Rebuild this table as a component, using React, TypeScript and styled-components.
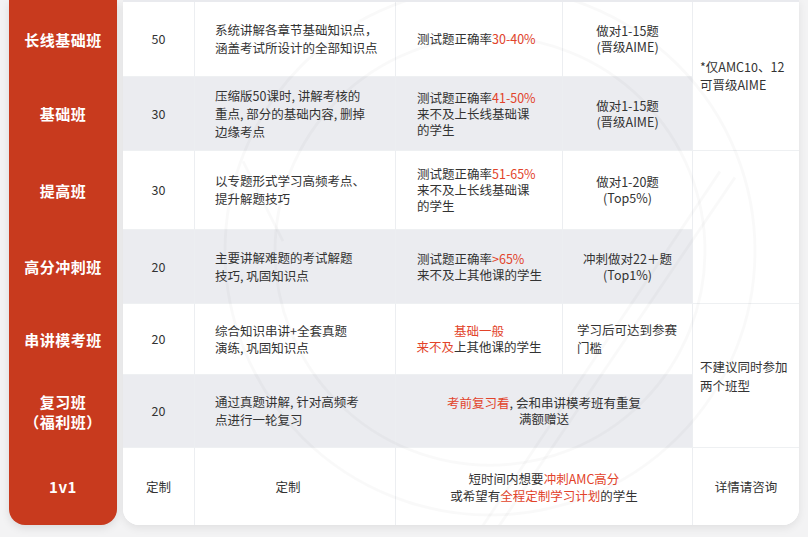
import styled, { createGlobalStyle } from "styled-components";

const GlobalStyle = createGlobalStyle`
  html, body {
    margin: 0;
    padding: 0;
    background: #f3f3f4;
  }
  body {
    font-family: "Noto Sans CJK SC", "Noto Sans", sans-serif;
    color: #333;
  }
`;

// 表格行高（与左侧红色标签列共用）
const ROWS = "75px 74px 79px 74px 71px 73px 77px";

export default function App() {
  return (
    <>
      <GlobalStyle />
      <Page>
        <LabelColumn>
          <Label>长线基础班</Label>
          <Label>基础班</Label>
          <Label>提高班</Label>
          <Label>高分冲刺班</Label>
          <Label>串讲模考班</Label>
          <Label>
            复习班
            <br />
            （福利班）
          </Label>
          <Label>1v1</Label>
        </LabelColumn>

        <Card>
          <Watermark viewBox="0 0 676 525" preserveAspectRatio="none">
            <circle cx="367" cy="250" r="215" />
            <circle cx="367" cy="250" r="265" />
            <line x1="357" y1="530" x2="597" y2="170" />
            <line x1="372" y1="532" x2="612" y2="176" />
            <line x1="120" y1="160" x2="160" y2="240" />
          </Watermark>

          {/* 长线基础班 */}
          <Cell $col="1" $row="1" $align="center">50</Cell>
          <Cell $col="2" $row="1" $pl={20} $lh={18}>
            系统讲解各章节基础知识点，
            <br />
            涵盖考试所设计的全部知识点
          </Cell>
          <Cell $col="3" $row="1" $pl={21}>
            <span>
              测试题正确率<Hl>30-40%</Hl>
            </span>
          </Cell>
          <Cell $col="4" $row="1" $align="center">
            做对1-15题
            <br />
            (晋级AIME)
          </Cell>
          <Cell $col="5" $row="1 / 3" $pl={7} $lh={18} $last>
            *仅AMC10、12
            <br />
            可晋级AIME
          </Cell>

          {/* 基础班 */}
          <Cell $col="1" $row="2" $align="center" $shade>30</Cell>
          <Cell $col="2" $row="2" $pl={20} $lh={18} $shade>
            压缩版50课时, 讲解考核的
            <br />
            重点, 部分的基础内容, 删掉
            <br />
            边缘考点
          </Cell>
          <Cell $col="3" $row="2" $pl={21} $shade>
            <span>
              测试题正确率<Hl>41-50%</Hl>
              <br />
              来不及上长线基础课
              <br />
              的学生
            </span>
          </Cell>
          <Cell $col="4" $row="2" $align="center" $shade>
            做对1-15题
            <br />
            (晋级AIME)
          </Cell>

          {/* 提高班 */}
          <Cell $col="1" $row="3" $align="center">30</Cell>
          <Cell $col="2" $row="3" $pl={20} $lh={18}>
            以专题形式学习高频考点、
            <br />
            提升解题技巧
          </Cell>
          <Cell $col="3" $row="3" $pl={21}>
            <span>
              测试题正确率<Hl>51-65%</Hl>
              <br />
              来不及上长线基础课
              <br />
              的学生
            </span>
          </Cell>
          <Cell $col="4" $row="3" $align="center">
            做对1-20题
            <br />
            (Top5%)
          </Cell>
          <Cell $col="5" $row="3 / 5" $last />

          {/* 高分冲刺班 */}
          <Cell $col="1" $row="4" $align="center" $shade>20</Cell>
          <Cell $col="2" $row="4" $pl={20} $lh={18} $shade>
            主要讲解难题的考试解题
            <br />
            技巧, 巩固知识点
          </Cell>
          <Cell $col="3" $row="4" $pl={21} $shade>
            <span>
              测试题正确率<Hl>&gt;65%</Hl>
              <br />
              来不及上其他课的学生
            </span>
          </Cell>
          <Cell $col="4" $row="4" $align="center" $shade>
            冲刺做对22＋题
            <br />
            (Top1%)
          </Cell>

          {/* 串讲模考班 */}
          <Cell $col="1" $row="5" $align="center">20</Cell>
          <Cell $col="2" $row="5" $pl={20} $lh={17}>
            综合知识串讲+全套真题
            <br />
            演练, 巩固知识点
          </Cell>
          <Cell $col="3" $row="5" $align="center">
            <span>
              <Hl>基础一般</Hl>
              <br />
              <Hl>来不及</Hl>上其他课的学生
            </span>
          </Cell>
          <Cell $col="4" $row="5" $pl={14} $lh={18}>
            学习后可达到参赛
            <br />
            门槛
          </Cell>
          <Cell $col="5" $row="5 / 7" $pl={7} $lh={19} $last>
            不建议同时参加
            <br />
            两个班型
          </Cell>

          {/* 复习班 */}
          <Cell $col="1" $row="6" $align="center" $shade>20</Cell>
          <Cell $col="2" $row="6" $pl={20} $lh={18} $shade>
            通过真题讲解, 针对高频考
            <br />
            点进行一轮复习
          </Cell>
          <Cell $col="3 / 5" $row="6" $align="center" $shade>
            <span>
              <Hl>考前复习看</Hl>, 会和串讲模考班有重复
              <br />
              满额赠送
            </span>
          </Cell>

          {/* 1v1 */}
          <Cell $col="1" $row="7" $align="center" $bottom>定制</Cell>
          <Cell $col="2" $row="7" $align="center" $pr={14} $bottom>定制</Cell>
          <Cell $col="3 / 5" $row="7" $align="center" $lh={17} $bottom>
            <span>
              短时间内想要<Hl>冲刺AMC高分</Hl>
              <br />
              或希望有<Hl>全程定制学习计划</Hl>的学生
            </span>
          </Cell>
          <Cell $col="5" $row="7" $align="center" $last $bottom>
            详情请咨询
          </Cell>
        </Card>
      </Page>
    </>
  );
}

const Page = styled.div`
  display: flex;
  align-items: flex-start;
  gap: 6px;
  padding: 0 9px 12px 9px;
  height: 537px;
  box-sizing: border-box;
  overflow: hidden;
`;

const LabelColumn = styled.div`
  width: 108px;
  flex-shrink: 0;
  padding-top: 2px;
  display: grid;
  grid-template-rows: ${ROWS};
  background: #c83a1e;
  border-radius: 0 0 16px 16px;
  box-shadow: 0 3px 8px rgba(0, 0, 0, 0.1);
`;

const Label = styled.div`
  display: flex;
  align-items: center;
  justify-content: center;
  text-align: center;
  color: #fff;
  font-size: 15px;
  font-weight: 700;
  line-height: 20px;
  letter-spacing: 0.5px;
`;

const Card = styled.div`
  position: relative;
  width: 676px;
  flex-shrink: 0;
  display: grid;
  grid-template-columns: 72px 201px 167px 130px 106px;
  grid-template-rows: ${ROWS};
  background: #fff;
  border-top: 2px solid #e9eaee;
  border-radius: 0 0 16px 16px;
  overflow: hidden;
  box-shadow: 0 3px 8px rgba(0, 0, 0, 0.08);
`;

const Watermark = styled.svg`
  position: absolute;
  inset: 0;
  width: 100%;
  height: 100%;
  pointer-events: none;
  z-index: 2;
  fill: none;
  stroke: rgba(0, 0, 0, 0.022);
  stroke-width: 3;
`;

const Cell = styled.div<{
  $col: string;
  $row: string;
  $align?: "left" | "center";
  $shade?: boolean;
  $pl?: number;
  $pr?: number;
  $lh?: number;
  $last?: boolean;
  $bottom?: boolean;
}>`
  grid-column: ${(p) => p.$col};
  grid-row: ${(p) => p.$row};
  display: flex;
  align-items: center;
  justify-content: ${(p) => (p.$align === "center" ? "center" : "flex-start")};
  text-align: ${(p) => (p.$align === "center" ? "center" : "left")};
  padding-left: ${(p) => p.$pl ?? 0}px;
  padding-right: ${(p) => p.$pr ?? 0}px;
  box-sizing: border-box;
  background: ${(p) => (p.$shade ? "#ebecf0" : "#fff")};
  border-right: ${(p) => (p.$last ? "none" : "1px solid #eceef1")};
  border-bottom: ${(p) => (p.$bottom ? "none" : "1px solid #eef0f2")};
  font-size: 12.5px;
  line-height: ${(p) => p.$lh ?? 16}px;
  color: #333;
  white-space: nowrap;
`;

const Hl = styled.span`
  color: #e2432a;
`;
